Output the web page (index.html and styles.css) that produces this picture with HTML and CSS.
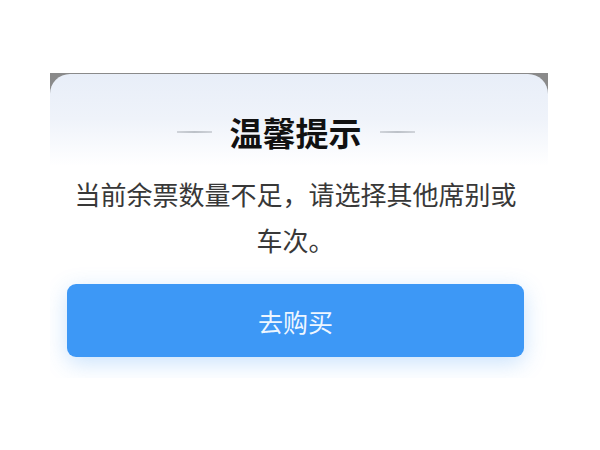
FILE: index.html
```html
<!DOCTYPE html>
<html lang="zh-CN">
<head>
  <meta charset="UTF-8">
  <title>温馨提示</title>
  <link rel="stylesheet" href="styles.css">
</head>
<body>

<div class="frame">
  <div class="dialog">
    <div class="dialog-title">
      <span class="title-line"></span>
      <h2>温馨提示</h2>
      <span class="title-line"></span>
    </div>
    <p class="dialog-msg">当前余票数量不足，请选择其他席别或车次。</p>
    <button class="buy-btn">去购买</button>
  </div>
</div>

</body>
</html>
```

FILE: styles.css
```css
body {
  margin: 0;
  background: #fff;
  font-family: "Noto Sans CJK SC", "Noto Sans", sans-serif;
}
.frame {
  width: 498px;
  margin: 73px 0 0 50px;
  padding-top: 1px;
  background: linear-gradient(#8a8a8a 0, #8a8a8a 30px, #fff 30px);
}
.dialog {
  padding: 38px 24px 21px 17px;
  border-radius: 20px 20px 0 0;
  background: linear-gradient(#e8eef8 0, #eff3fa 45px, #fff 92px);
  overflow: hidden;
}
.dialog-title {
  display: flex;
  align-items: center;
  justify-content: center;
  gap: 18px;
  height: 40px;
}
.dialog-title h2 {
  margin: 0;
  font-size: 33px;
  font-weight: 700;
  line-height: 40px;
  color: #111;
}
.title-line {
  width: 35px;
  height: 2px;
  background: linear-gradient(90deg, #d0d4da, #bcc1c8 50%, #d0d4da);
}
.dialog-msg {
  margin: 19px 0 0;
  font-size: 26px;
  line-height: 46px;
  color: #383838;
  text-align: center;
}
.buy-btn {
  display: block;
  width: 100%;
  height: 73px;
  margin-top: 21px;
  border: none;
  border-radius: 9px;
  background: #3d98f6;
  color: #eef6ff;
  font-family: inherit;
  font-size: 25px;
  box-shadow: 0 6px 22px rgba(60, 150, 245, 0.28);
}
```
